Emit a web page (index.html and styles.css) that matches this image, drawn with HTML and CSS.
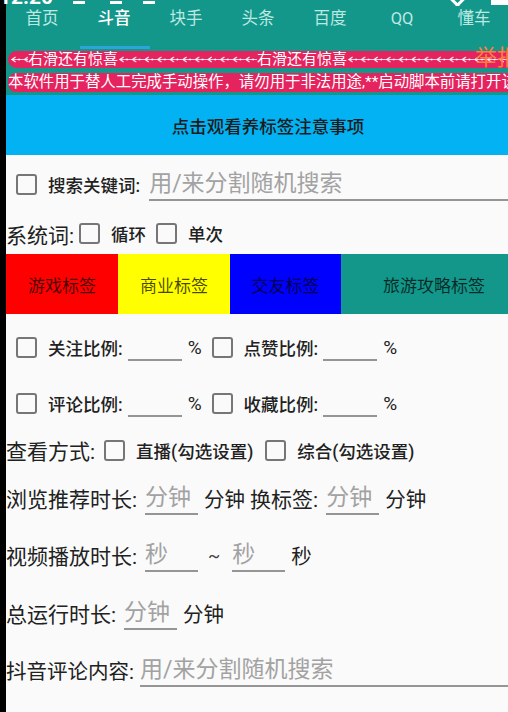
FILE: index.html
```html
<!DOCTYPE html>
<html lang="zh-CN">
<head>
  <meta charset="UTF-8">
  <meta name="viewport" content="width=device-width, initial-scale=1.0">
  <title>斗音助手</title>
  <link rel="stylesheet" href="styles.css">
</head>
<body>
  <div class="status">
    <span class="clock">12:20</span>
    <i class="dash d1"></i><i class="dash d2"></i><i class="dash d3"></i>
    <i class="sig"></i><i class="bat"></i>
  </div>

  <div class="phone">
    <header class="top">
      <nav class="tabs">
        <span class="tab">首页</span>
        <span class="tab on">斗音</span>
        <span class="tab">块手</span>
        <span class="tab">头条</span>
        <span class="tab">百度</span>
        <span class="tab">QQ</span>
        <span class="tab">懂车</span>
      </nav>
      <div class="marquee">
        <svg class="arrows" width="18" height="17"><use href="#arrowLine"/></svg>右滑还有惊喜<svg class="arrows" width="139" height="17"><use href="#arrowLine"/></svg>右滑还有惊喜<svg class="arrows" width="170" height="17"><use href="#arrowLine"/></svg>
      </div>
      <div class="notice">本软件用于替人工完成手动操作，请勿用于非法用途,**启动脚本前请打开该软件的无障碍服务</div>
      <span class="report">举报</span>
    </header>

    <svg width="0" height="0" class="defs">
      <defs>
        <pattern id="heads" width="12.6" height="17" patternUnits="userSpaceOnUse">
          <path d="M2 8.5 L5.5 6 M2 8.5 L5.5 11" stroke="#fff" stroke-width="1" fill="none"/>
          <circle cx="9" cy="8.5" r="0.9" fill="#fff"/>
        </pattern>
        <g id="arrowLine">
          <line x1="1" y1="8.5" x2="400" y2="8.5" stroke="#fff" stroke-width="0.8"/>
          <rect x="0" y="0" width="400" height="17" fill="url(#heads)"/>
        </g>
      </defs>
    </svg>

    <button class="tips">点击观看养标签注意事项</button>

    <main class="form">
      <div class="row search-row">
        <label class="check"><span class="box"></span>搜索关键词:</label>
        <input class="field grow" placeholder="用/来分割随机搜索">
      </div>

      <div class="row sys-row">
        <span class="label">系统词:</span>
        <label class="check"><span class="box"></span>循环</label>
        <label class="check"><span class="box"></span>单次</label>
      </div>

      <div class="tags">
        <span class="tag red">游戏标签</span>
        <span class="tag yellow">商业标签</span>
        <span class="tag blue">交友标签</span>
        <span class="tag teal">旅游攻略标签</span>
      </div>

      <div class="row ratio-row first">
        <label class="check"><span class="box"></span>关注比例:</label>
        <input class="field small">
        <span class="pct">%</span>
        <label class="check"><span class="box"></span>点赞比例:</label>
        <input class="field small">
        <span class="pct">%</span>
      </div>

      <div class="row ratio-row">
        <label class="check"><span class="box"></span>评论比例:</label>
        <input class="field small">
        <span class="pct">%</span>
        <label class="check"><span class="box"></span>收藏比例:</label>
        <input class="field small">
        <span class="pct">%</span>
      </div>

      <div class="row view-row">
        <span class="label">查看方式:</span>
        <label class="check"><span class="box"></span>直播(勾选设置)</label>
        <label class="check"><span class="box"></span>综合(勾选设置)</label>
      </div>

      <div class="row browse-row">
        <span class="label">浏览推荐时长:</span>
        <input class="field short" placeholder="分钟">
        <span class="unit">分钟</span>
        <span class="label swap">换标签:</span>
        <input class="field short" placeholder="分钟">
        <span class="unit">分钟</span>
      </div>

      <div class="row video-row">
        <span class="label">视频播放时长:</span>
        <input class="field short" placeholder="秒">
        <span class="tilde">~</span>
        <input class="field short" placeholder="秒">
        <span class="unit">秒</span>
      </div>

      <div class="row total-row">
        <span class="label">总运行时长:</span>
        <input class="field short" placeholder="分钟">
        <span class="unit">分钟</span>
      </div>

      <div class="row comment-row">
        <span class="label">抖音评论内容:</span>
        <input class="field grow" placeholder="用/来分割随机搜索">
      </div>
    </main>
  </div>
</body>
</html>
```

FILE: styles.css
```css
body {
  margin: 0;
  background: #000;
  font-family: Roboto, "Noto Sans CJK SC", "Noto Sans", sans-serif;
  position: relative;
  overflow: hidden;
  height: 712px;
}
.phone {
  margin-left: 6px;
  height: 712px;
  background: #fafafa;
  position: relative;
  overflow: hidden;
  color: #212121;
}
.defs {
  position: absolute;
}

/* cropped status bar */
.status {
  position: absolute;
  top: 0;
  left: 0;
  right: 0;
  height: 6px;
  z-index: 5;
  overflow: hidden;
}
.clock {
  position: absolute;
  left: -1px;
  top: -15px;
  color: #fff;
  font: bold 21px Roboto, sans-serif;
}
.dash {
  position: absolute;
  top: 1px;
  width: 12px;
  height: 3px;
  background: #fff;
}
.d1 { left: 73px; }
.d2 { left: 110px; }
.d3 { left: 143px; }
.sig {
  position: absolute;
  left: 452px;
  top: -6px;
  width: 8px;
  height: 8px;
  border-right: 3px solid #fff;
  border-bottom: 3px solid #fff;
  transform: rotate(45deg);
}
.bat {
  position: absolute;
  left: 491px;
  top: 0;
  width: 17px;
  height: 5px;
  background: #fff;
}

/* header */
.top {
  background: #12978a;
  padding-bottom: 3px;
  position: relative;
}
.tabs {
  display: flex;
  height: 50px;
  overflow: hidden;
}
.tab {
  flex: 0 0 72px;
  text-align: center;
  font-size: 16.5px;
  line-height: 20px;
  padding-top: 9px;
  color: #bfe7e2;
  position: relative;
}
.tab.on {
  color: #fff;
  font-weight: 500;
}
.tab.on::after {
  content: "";
  position: absolute;
  left: 2px;
  right: 0;
  bottom: 1px;
  height: 3px;
  background: #2ba4da;
}
.marquee, .notice {
  background: #e5235e;
  color: #fff;
  white-space: nowrap;
  overflow: hidden;
  margin-left: 2px;
}
.marquee {
  display: flex;
  align-items: center;
  height: 17px;
  line-height: 17px;
  font-size: 15px;
  margin-top: 1px;
  border-radius: 9px 0 0 9px;
}
.arrows {
  flex: none;
  display: block;
}
.marquee .arrows:first-child {
  margin-left: 2px;
}
.notice {
  height: 19px;
  line-height: 19px;
  font-size: 15.4px;
  margin-top: 5px;
  border-radius: 8px 0 0 8px;
}
.report {
  position: absolute;
  left: 469px;
  top: 47px;
  font-size: 22px;
  line-height: 22px;
  color: #ff7e3c;
  white-space: nowrap;
}

.tips {
  display: block;
  width: 100%;
  height: 60px;
  border: none;
  margin: 0;
  padding: 0 0 0 22px;
  background: #03b2f3;
  color: #1c1c1c;
  font-family: inherit;
  font-size: 17.5px;
  font-weight: 500;
}

/* form */
.row {
  display: flex;
  align-items: center;
  white-space: nowrap;
}
.label {
  font-size: 21px;
}
.check {
  display: inline-flex;
  align-items: center;
  gap: 11px;
  font-size: 17.5px;
  font-weight: 500;
}
.box {
  width: 21px;
  height: 21px;
  box-sizing: border-box;
  border: 2px solid #767676;
  border-radius: 3px;
}
.field {
  appearance: none;
  border: none;
  border-bottom: 2px solid #959595;
  background: transparent;
  padding: 0;
  height: 34px;
  box-sizing: border-box;
  font-family: inherit;
  font-size: 23px;
  color: #212121;
  outline: none;
}
.field::placeholder {
  color: #a2a2a2;
}
.grow {
  flex: 1;
  min-width: 0;
}
.short {
  width: 53px;
}
.small {
  width: 54px;
  height: 28px;
  margin-left: 5px;
}
.unit {
  font-size: 20.5px;
  margin-left: 6px;
}
.pct {
  font-size: 19px;
  margin: 0 10px 0 6px;
}

.search-row {
  height: 58px;
  padding-left: 10px;
}
.search-row .field {
  margin-left: 9px;
}
.sys-row {
  height: 41px;
}
.sys-row .check {
  margin-left: 5px;
}
.sys-row .check + .check {
  margin-left: 10px;
}

.tags {
  display: flex;
  height: 60px;
  overflow: hidden;
}
.tag {
  flex: 0 0 112px;
  display: flex;
  align-items: center;
  justify-content: center;
  font-size: 17px;
  color: rgba(0, 0, 0, 0.72);
}
.tag.red { background: #ff0000; }
.tag.yellow { background: #ffff00; }
.tag.blue { background: #0000ff; flex-basis: 111px; }
.tag.teal { background: #12978a; flex-basis: 186px; }

.ratio-row {
  height: 56px;
  padding-left: 10px;
}
.ratio-row.first {
  margin-top: 5px;
}
.view-row {
  height: 38px;
}
.view-row .check {
  margin-left: 9px;
}
.view-row .check + .check {
  margin-left: 12px;
}
.browse-row {
  height: 58px;
}
.browse-row .field, .video-row .field, .total-row .field {
  margin-left: 8px;
}
.comment-row .label {
  font-size: 20.5px;
}
.comment-row .field {
  margin-left: 6px;
}
.swap {
  margin-left: 5px;
}
.browse-row .swap + .field {
  margin-left: 8px;
}
.video-row {
  height: 56px;
}
.tilde {
  font-size: 18px;
  margin: 0 12px 0 10px;
  color: #444;
}
.video-row .tilde + .field {
  margin-left: 0;
}
.total-row {
  height: 60px;
}
.comment-row {
  height: 54px;
}
```
